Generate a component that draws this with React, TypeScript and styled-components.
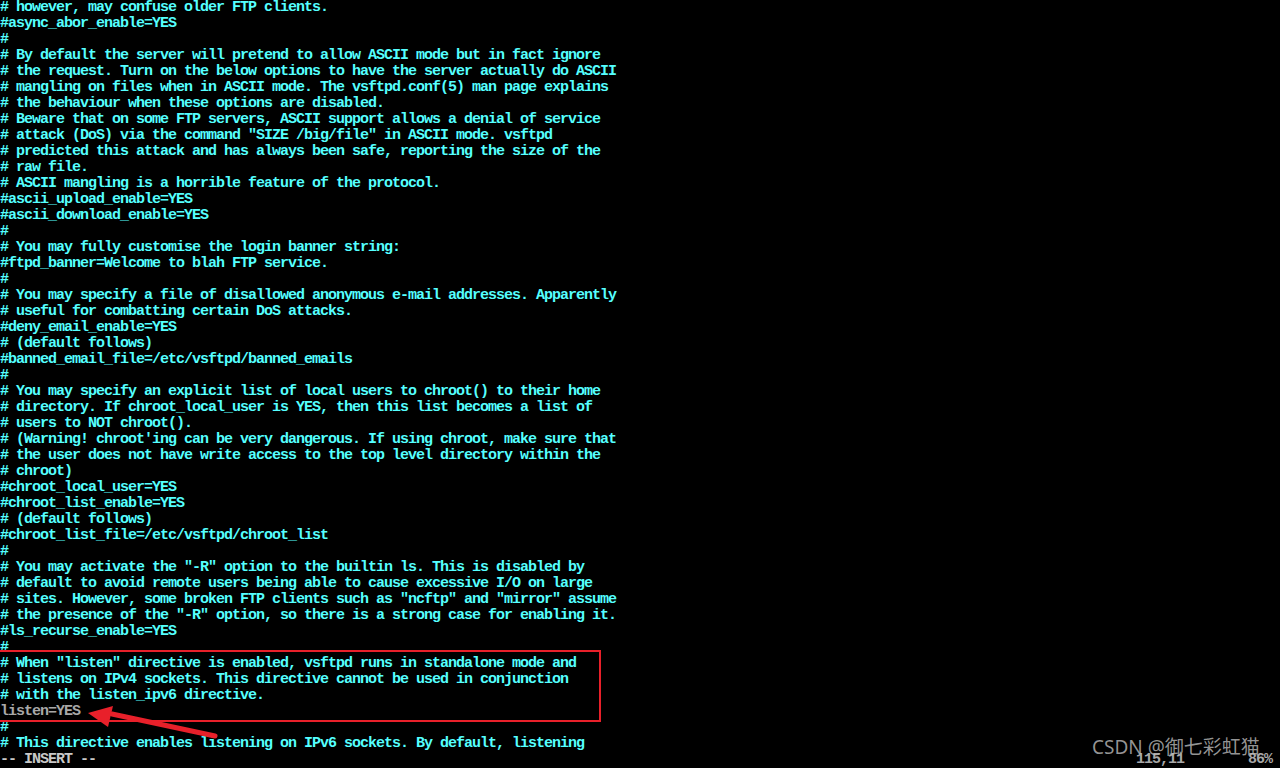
import React from "react";
import styled, { createGlobalStyle } from "styled-components";

const Global = createGlobalStyle`
  html, body { margin: 0; padding: 0; background: #000; }
  body { width: 1280px; height: 768px; overflow: hidden; }
`;

const Screen = styled.div`
  position: relative;
  width: 1280px;
  height: 768px;
  background: #000;
  display: flex;
  flex-direction: column;
  overflow: hidden;
  font-family: "Liberation Mono", "DejaVu Sans Mono", monospace;
  font-size: 15px;
  font-weight: bold;
  letter-spacing: -1px;
`;

const Line = styled.div<{ $tone?: "cyan" | "grey" }>`
  height: 16px;
  line-height: 16px;
  white-space: pre;
  color: ${(p) => (p.$tone === "grey" ? "#a8a8a8" : "#55ffff")};
`;

const StatusBar = styled.div`
  height: 16px;
  line-height: 16px;
  display: flex;
  white-space: pre;
  color: #c8c8c8;
`;

const Ruler = styled.span`
  margin-left: auto;
  width: 144px;
  color: #a8a8a8;
`;

const Highlight = styled.div`
  position: absolute;
  left: -2px;
  top: 650px;
  width: 599px;
  height: 68px;
  border: 2px solid #e8202a;
  pointer-events: none;
`;

const Arrow = styled.svg`
  position: absolute;
  left: 80px;
  top: 700px;
  width: 145px;
  height: 42px;
`;

const Watermark = styled.div`
  position: absolute;
  left: 1092px;
  top: 735px;
  font-family: "Noto Sans", "Noto Sans CJK SC", sans-serif;
  font-weight: normal;
  font-size: 19px;
  letter-spacing: 0;
  line-height: 24px;
  color: rgba(190, 190, 190, 0.78);
  white-space: nowrap;
`;

const lines: string[] = [
  "# however, may confuse older FTP clients.",
  "#async_abor_enable=YES",
  "#",
  "# By default the server will pretend to allow ASCII mode but in fact ignore",
  "# the request. Turn on the below options to have the server actually do ASCII",
  "# mangling on files when in ASCII mode. The vsftpd.conf(5) man page explains",
  "# the behaviour when these options are disabled.",
  "# Beware that on some FTP servers, ASCII support allows a denial of service",
  "# attack (DoS) via the command \"SIZE /big/file\" in ASCII mode. vsftpd",
  "# predicted this attack and has always been safe, reporting the size of the",
  "# raw file.",
  "# ASCII mangling is a horrible feature of the protocol.",
  "#ascii_upload_enable=YES",
  "#ascii_download_enable=YES",
  "#",
  "# You may fully customise the login banner string:",
  "#ftpd_banner=Welcome to blah FTP service.",
  "#",
  "# You may specify a file of disallowed anonymous e-mail addresses. Apparently",
  "# useful for combatting certain DoS attacks.",
  "#deny_email_enable=YES",
  "# (default follows)",
  "#banned_email_file=/etc/vsftpd/banned_emails",
  "#",
  "# You may specify an explicit list of local users to chroot() to their home",
  "# directory. If chroot_local_user is YES, then this list becomes a list of",
  "# users to NOT chroot().",
  "# (Warning! chroot'ing can be very dangerous. If using chroot, make sure that",
  "# the user does not have write access to the top level directory within the",
  "# chroot)",
  "#chroot_local_user=YES",
  "#chroot_list_enable=YES",
  "# (default follows)",
  "#chroot_list_file=/etc/vsftpd/chroot_list",
  "#",
  "# You may activate the \"-R\" option to the builtin ls. This is disabled by",
  "# default to avoid remote users being able to cause excessive I/O on large",
  "# sites. However, some broken FTP clients such as \"ncftp\" and \"mirror\" assume",
  "# the presence of the \"-R\" option, so there is a strong case for enabling it.",
  "#ls_recurse_enable=YES",
  "#",
  "# When \"listen\" directive is enabled, vsftpd runs in standalone mode and",
  "# listens on IPv4 sockets. This directive cannot be used in conjunction",
  "# with the listen_ipv6 directive.",
  "listen=YES",
  "#",
  "# This directive enables listening on IPv6 sockets. By default, listening",
];

export default function App() {
  return (
    <>
      <Global />
      <Screen>
        {lines.map((l, i) => (
          <Line key={i} $tone={l.startsWith("#") ? "cyan" : "grey"}>
            {l}
          </Line>
        ))}
        <StatusBar>
          <span>-- INSERT --</span>
          <Ruler>{"115,11        86%"}</Ruler>
        </StatusBar>
        <Highlight />
        <Arrow viewBox="0 0 145 42">
          <path d="M135 36 L32 14" stroke="#e8202a" strokeWidth="5" strokeLinecap="round" />
          <path d="M8 13 L33 6 L28 27 Z" fill="#e8202a" />
        </Arrow>
        <Watermark>CSDN @御七彩虹猫</Watermark>
      </Screen>
    </>
  );
}
